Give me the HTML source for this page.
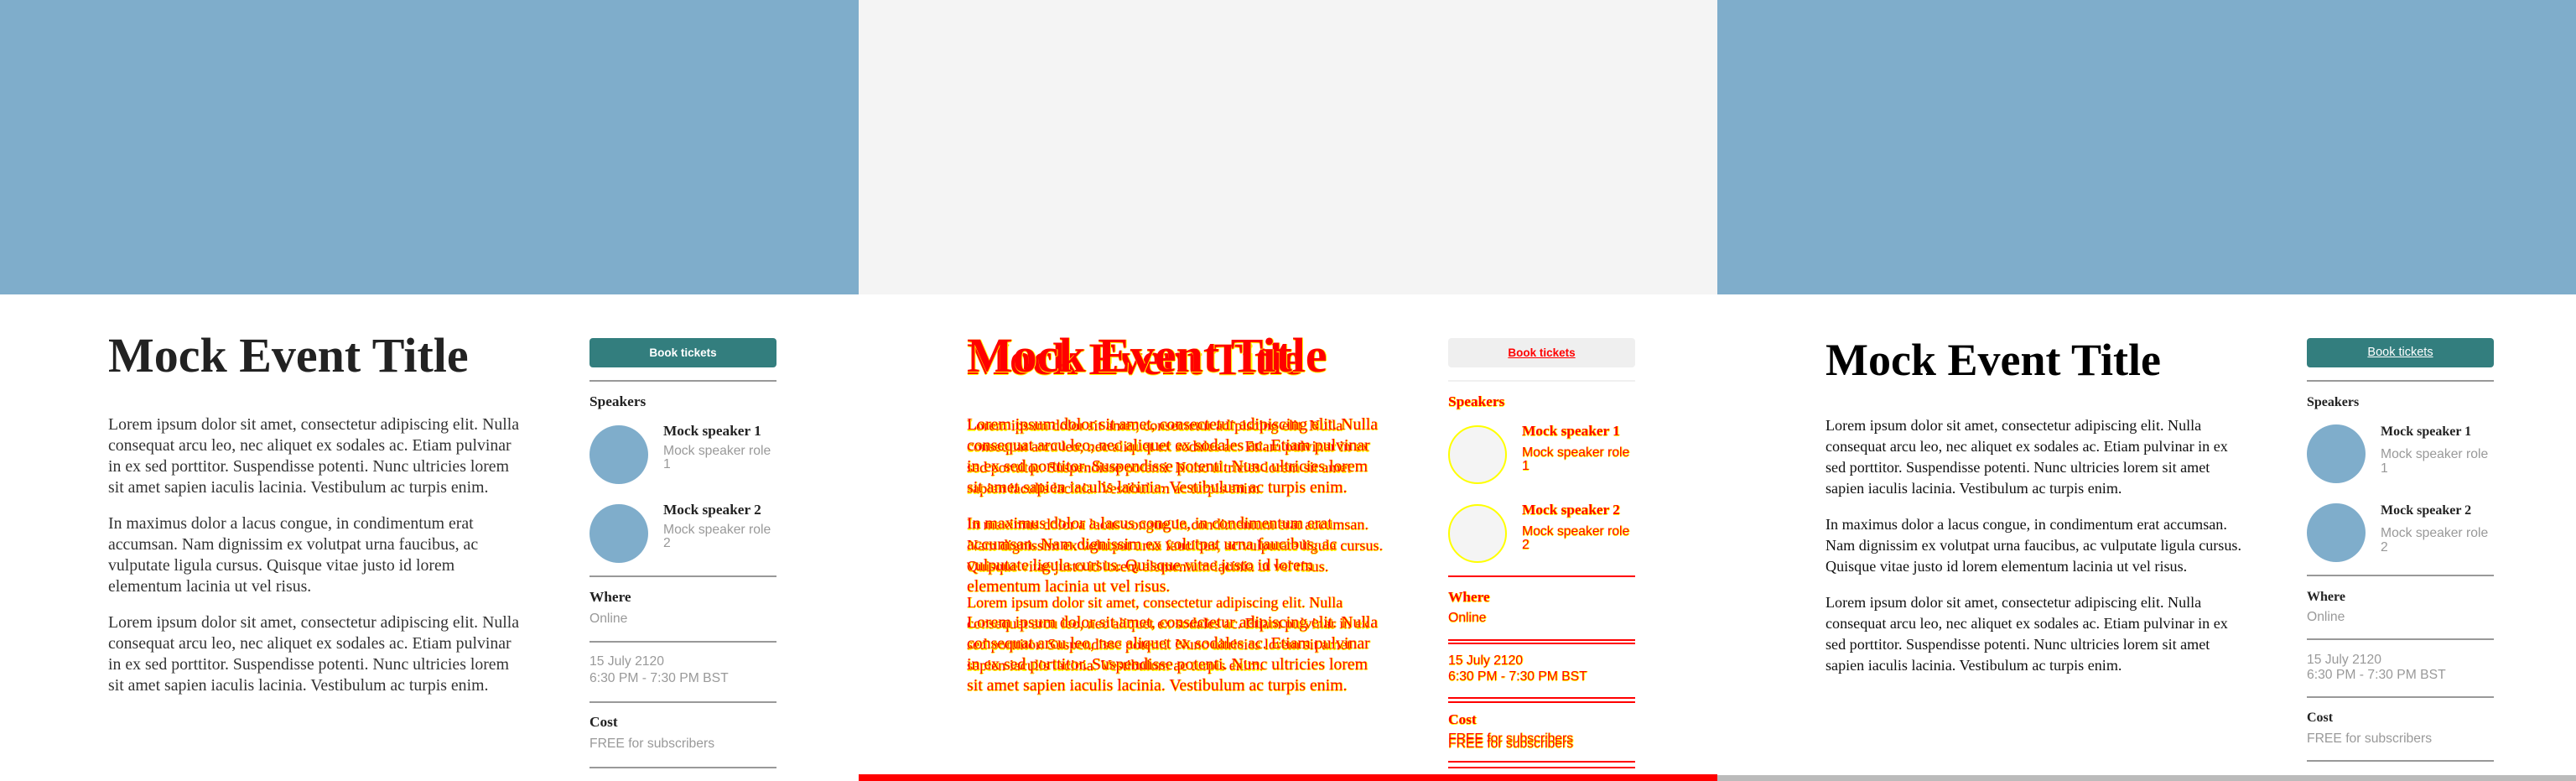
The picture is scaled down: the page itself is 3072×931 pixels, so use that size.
<!DOCTYPE html>
<html><head><meta charset="utf-8"><style>
*{margin:0;padding:0;box-sizing:border-box}
body{width:3072px;height:931px;overflow:hidden;background:#fff;position:relative}
.panel{position:absolute;top:0;width:1024px;height:931px;overflow:hidden;background:#fff}
.hero{position:absolute;left:0;top:0;width:1024px;height:351px;background:#7fadcb}
.a{position:absolute;white-space:nowrap}
.title{font-family:"Liberation Serif",serif;font-weight:bold;line-height:1;color:#222}
.body{position:absolute;left:129px;width:500px;font-family:"Liberation Serif",serif;line-height:25px;color:#333}
.body p{margin:0 0 18px}
.btn{position:absolute;left:703px;top:403px;width:223px;height:35px;border-radius:4px;background:#337e7e;color:#fff;font-family:"Liberation Sans",sans-serif;font-weight:bold;font-size:13.5px;text-align:center;line-height:35px}
.hr{position:absolute;left:703px;width:223px;height:2px;background:#999}
.h{font-family:"Liberation Serif",serif;font-weight:bold;font-size:17.3px;line-height:20px;color:#222}
.g{font-family:"Liberation Sans",sans-serif;font-size:15.7px;color:#999}
.h3{font-size:16px}
.circ{position:absolute;left:703px;width:70px;height:70px;border-radius:50%;background:#7fadcb}
.b1{top:494px;font-size:19.8px}
.b3{top:495px;font-size:18.1px}
.diff .title,.diff .body,.diff .h,.diff .g{color:#f00;text-shadow:1px 0 #ff0,0 1px #ff0}
</style></head><body>

<!-- panel 1 -->
<div class="panel" style="left:0">
<div class="hero"></div>
<div class="a title" style="left:129px;top:395px;font-size:58px">Mock Event Title</div>
<div class="body b1">
<p>Lorem ipsum dolor sit amet, consectetur adipiscing elit. Nulla consequat arcu leo, nec aliquet ex sodales ac. Etiam pulvinar in ex sed porttitor. Suspendisse potenti. Nunc ultricies lorem sit amet sapien iaculis lacinia. Vestibulum ac turpis enim.</p>
<p>In maximus dolor a lacus congue, in condimentum erat accumsan. Nam dignissim ex volutpat urna faucibus, ac vulputate ligula cursus. Quisque vitae justo id lorem elementum lacinia ut vel risus.</p>
<p>Lorem ipsum dolor sit amet, consectetur adipiscing elit. Nulla consequat arcu leo, nec aliquet ex sodales ac. Etiam pulvinar in ex sed porttitor. Suspendisse potenti. Nunc ultricies lorem sit amet sapien iaculis lacinia. Vestibulum ac turpis enim.</p>
</div>
<div class="btn">Book tickets</div>
<div class="hr" style="top:453px"></div>
<div class="a h" style="left:703px;top:469px">Speakers</div>
<div class="circ" style="top:507px"></div>
<div class="a h" style="left:791px;top:504px">Mock speaker 1</div>
<div class="a g" style="left:791px;top:530px;line-height:16px">Mock speaker role<br>1</div>
<div class="circ" style="top:601px"></div>
<div class="a h" style="left:791px;top:598px">Mock speaker 2</div>
<div class="a g" style="left:791px;top:624px;line-height:16px">Mock speaker role<br>2</div>
<div class="hr" style="top:686px"></div>
<div class="a h" style="left:703px;top:702px">Where</div>
<div class="a g" style="left:703px;top:728px;line-height:20px">Online</div>
<div class="hr" style="top:764px"></div>
<div class="a g" style="left:703px;top:779px;line-height:20px">15 July 2120<br>6:30 PM - 7:30 PM BST</div>
<div class="hr" style="top:836px"></div>
<div class="a h" style="left:703px;top:851px">Cost</div>
<div class="a g" style="left:703px;top:877px;line-height:20px">FREE for subscribers</div>
<div class="hr" style="top:914px"></div>
</div>

<!-- panel 2 diff -->
<div class="panel diff" style="left:1024px">
<div class="hero" style="background:#f4f4f4"></div>
<div class="a title" style="left:129px;top:401px;font-size:54px">Mock Event Title</div>
<div class="a title" style="left:129px;top:395px;font-size:58px">Mock Event Title</div>
<div class="body b3">
<p>Lorem ipsum dolor sit amet, consectetur adipiscing elit. Nulla consequat arcu leo, nec aliquet ex sodales ac. Etiam pulvinar in ex sed porttitor. Suspendisse potenti. Nunc ultricies lorem sit amet sapien iaculis lacinia. Vestibulum ac turpis enim.</p>
<p>In maximus dolor a lacus congue, in condimentum erat accumsan. Nam dignissim ex volutpat urna faucibus, ac vulputate ligula cursus. Quisque vitae justo id lorem elementum lacinia ut vel risus.</p>
<p>Lorem ipsum dolor sit amet, consectetur adipiscing elit. Nulla consequat arcu leo, nec aliquet ex sodales ac. Etiam pulvinar in ex sed porttitor. Suspendisse potenti. Nunc ultricies lorem sit amet sapien iaculis lacinia. Vestibulum ac turpis enim.</p>
</div>
<div class="body b1">
<p>Lorem ipsum dolor sit amet, consectetur adipiscing elit. Nulla consequat arcu leo, nec aliquet ex sodales ac. Etiam pulvinar in ex sed porttitor. Suspendisse potenti. Nunc ultricies lorem sit amet sapien iaculis lacinia. Vestibulum ac turpis enim.</p>
<p>In maximus dolor a lacus congue, in condimentum erat accumsan. Nam dignissim ex volutpat urna faucibus, ac vulputate ligula cursus. Quisque vitae justo id lorem elementum lacinia ut vel risus.</p>
<p>Lorem ipsum dolor sit amet, consectetur adipiscing elit. Nulla consequat arcu leo, nec aliquet ex sodales ac. Etiam pulvinar in ex sed porttitor. Suspendisse potenti. Nunc ultricies lorem sit amet sapien iaculis lacinia. Vestibulum ac turpis enim.</p>
</div>
<div class="btn" style="background:#efefef;color:#f00;text-decoration:underline">Book tickets</div>
<div class="hr" style="top:453px;background:#f0f0f0"></div>
<div class="a h" style="left:703px;top:469px">Speakers</div>
<div class="circ" style="top:507px;background:#f4f4f4;border:2px solid #ff0"></div>
<div class="a h" style="left:791px;top:504px">Mock speaker 1</div>
<div class="a g" style="left:791px;top:532px;line-height:16px">Mock speaker role<br>1</div>
<div class="circ" style="top:601px;background:#f4f4f4;border:2px solid #ff0"></div>
<div class="a h" style="left:791px;top:598px">Mock speaker 2</div>
<div class="a g" style="left:791px;top:626px;line-height:16px">Mock speaker role<br>2</div>
<div class="hr" style="top:686px;background:#f00"></div>
<div class="a h" style="left:703px;top:702px">Where</div>
<div class="a g" style="left:703px;top:727px;line-height:20px">Online</div>
<div class="hr" style="top:762px;background:#f00"></div>
<div class="hr" style="top:766px;background:#f00"></div>
<div class="a g" style="left:703px;top:778px;line-height:19px">15 July 2120<br>6:30 PM - 7:30 PM BST</div>
<div class="hr" style="top:831px;background:#f00"></div>
<div class="hr" style="top:836px;background:#f00"></div>
<div class="a h" style="left:703px;top:848px">Cost</div>
<div class="a g" style="left:703px;top:871px;line-height:20px">FREE for subscribers</div>
<div class="a g" style="left:703px;top:877px;line-height:20px">FREE for subscribers</div>
<div class="hr" style="top:907px;background:#f00"></div>
<div class="hr" style="top:914px;background:#f00"></div>
<div style="position:absolute;left:0;top:923px;width:1024px;height:8px;background:#f00"></div>
</div>

<!-- panel 3 -->
<div class="panel" style="left:2048px">
<div class="hero"></div>
<div class="a title" style="left:129px;top:402px;font-size:54px;color:#000">Mock Event Title</div>
<div class="body b3" style="color:#111">
<p>Lorem ipsum dolor sit amet, consectetur adipiscing elit. Nulla consequat arcu leo, nec aliquet ex sodales ac. Etiam pulvinar in ex sed porttitor. Suspendisse potenti. Nunc ultricies lorem sit amet sapien iaculis lacinia. Vestibulum ac turpis enim.</p>
<p>In maximus dolor a lacus congue, in condimentum erat accumsan. Nam dignissim ex volutpat urna faucibus, ac vulputate ligula cursus. Quisque vitae justo id lorem elementum lacinia ut vel risus.</p>
<p>Lorem ipsum dolor sit amet, consectetur adipiscing elit. Nulla consequat arcu leo, nec aliquet ex sodales ac. Etiam pulvinar in ex sed porttitor. Suspendisse potenti. Nunc ultricies lorem sit amet sapien iaculis lacinia. Vestibulum ac turpis enim.</p>
</div>
<div class="btn" style="font-weight:normal;font-size:14.5px;text-decoration:underline">Book tickets</div>
<div class="hr" style="top:453px"></div>
<div class="a h h3" style="left:703px;top:470px">Speakers</div>
<div class="circ" style="top:506px"></div>
<div class="a h h3" style="left:791px;top:505px">Mock speaker 1</div>
<div class="a g" style="left:791px;top:533px;line-height:17px">Mock speaker role<br>1</div>
<div class="circ" style="top:600px"></div>
<div class="a h h3" style="left:791px;top:599px">Mock speaker 2</div>
<div class="a g" style="left:791px;top:627px;line-height:17px">Mock speaker role<br>2</div>
<div class="hr" style="top:685px"></div>
<div class="a h h3" style="left:703px;top:702px">Where</div>
<div class="a g" style="left:703px;top:726px;line-height:20px">Online</div>
<div class="hr" style="top:761px"></div>
<div class="a g" style="left:703px;top:778px;line-height:18px">15 July 2120<br>6:30 PM - 7:30 PM BST</div>
<div class="hr" style="top:830px"></div>
<div class="a h h3" style="left:703px;top:846px">Cost</div>
<div class="a g" style="left:703px;top:871px;line-height:20px">FREE for subscribers</div>
<div class="hr" style="top:906px"></div>
<div style="position:absolute;left:0;top:924px;width:1024px;height:7px;background:#bbb"></div>
</div>
</body></html>
